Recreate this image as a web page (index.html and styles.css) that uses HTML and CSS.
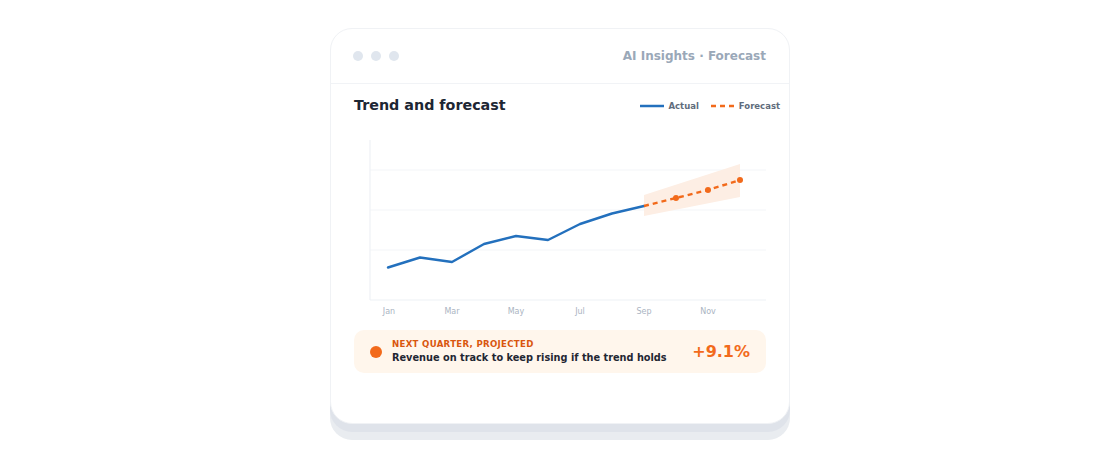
FILE: index.html
```html
<!DOCTYPE html>
<html>
<head>
<meta charset="utf-8">
<link rel="stylesheet" href="styles.css">
</head>
<body>
<div class="stage">
  <div class="card">
    <div class="bar">
      <div class="dots"><span></span><span></span><span></span></div>
      <div class="bar-title">AI Insights · Forecast</div>
    </div>
    <div class="body">
      <div class="head">
        <div class="title">Trend and forecast</div>
        <div class="legend">
          <span class="key"><svg width="24" height="4" viewBox="0 0 24 4"><line x1="0" y1="2" x2="24" y2="2" stroke="#2370bd" stroke-width="2.5"/></svg>Actual</span>
          <span class="key"><svg width="24" height="4" viewBox="0 0 24 4"><line x1="0" y1="2" x2="24" y2="2" stroke="#f26a1b" stroke-width="2.5" stroke-dasharray="5 4"/></svg>Forecast</span>
        </div>
      </div>
      <svg class="chart" width="412" height="184" viewBox="354 134 412 184">
        <line x1="370" y1="170" x2="766" y2="170" stroke="#f3f5f8" stroke-width="1"/>
        <line x1="370" y1="210" x2="766" y2="210" stroke="#f3f5f8" stroke-width="1"/>
        <line x1="370" y1="250" x2="766" y2="250" stroke="#f3f5f8" stroke-width="1"/>
        <line x1="370" y1="140" x2="370" y2="300" stroke="#eef1f5" stroke-width="1.2"/>
        <line x1="370" y1="300" x2="766" y2="300" stroke="#eef1f5" stroke-width="1.2"/>
        <polygon points="644,195 740,164 740,197 644,216" fill="#fdeee4"/>
        <polyline points="388,267.5 420,257.5 452,262 484,244 516,236 548,240 580,224 612,213.5 644,206" fill="none" stroke="#2370bd" stroke-width="2.4" stroke-linejoin="round" stroke-linecap="round"/>
        <polyline points="644,206 676,198 708,190 740,180" fill="none" stroke="#f26a1b" stroke-width="2.4" stroke-dasharray="5 4"/>
        <circle cx="676" cy="198" r="3" fill="#f26a1b"/>
        <circle cx="708" cy="190" r="3" fill="#f26a1b"/>
        <circle cx="740" cy="180" r="3" fill="#f26a1b"/>
        <g class="ticks">
          <text x="389" y="314">Jan</text>
          <text x="452" y="314">Mar</text>
          <text x="516" y="314">May</text>
          <text x="580" y="314">Jul</text>
          <text x="644" y="314">Sep</text>
          <text x="708" y="314">Nov</text>
        </g>
      </svg>
      <div class="callout">
        <span class="dot"></span>
        <div class="callout-text">
          <div class="eyebrow">NEXT QUARTER, PROJECTED</div>
          <div class="msg">Revenue on track to keep rising if the trend holds</div>
        </div>
        <div class="value">+9.1%</div>
      </div>
    </div>
  </div>
</div>
</body>
</html>
```

FILE: styles.css
```css
* { box-sizing: border-box; }
html, body { margin: 0; padding: 0; background: #ffffff; }
body { font-family: "DejaVu Sans", sans-serif; }
.stage {
  width: 1120px;
  height: 470px;
  padding-top: 28px;
  display: flex;
  justify-content: center;
  align-items: flex-start;
}
.card {
  width: 460px;
  height: 396px;
  background: #ffffff;
  border: 1px solid #f0f2f5;
  border-radius: 22px;
  box-shadow: 0 8px 0 #dfe3ea, 0 16px 0 #e9ecf0;
}
.bar {
  height: 55px;
  padding: 0 23px 0 22px;
  border-bottom: 1px solid #f1f3f6;
  display: flex;
  align-items: center;
  justify-content: space-between;
}
.dots { display: flex; gap: 8px; }
.dots span {
  width: 10px;
  height: 10px;
  border-radius: 50%;
  background: #e0e6ee;
}
.bar-title {
  font-size: 12px;
  font-weight: bold;
  color: #9aa8b8;
}
.body { padding: 0 23px; }
.head {
  height: 42px;
  display: flex;
  align-items: center;
  justify-content: space-between;
  margin-right: -14px;
}
.title {
  font-size: 14.3px;
  font-weight: bold;
  color: #1d2633;
}
.legend {
  display: flex;
  gap: 12px;
  font-size: 8.5px;
  font-weight: bold;
  color: #5f6c7c;
  padding-top: 2px;
}
.key { display: flex; align-items: center; gap: 4px; }
.chart { display: block; margin-top: 8px; }
.ticks text {
  font-family: "DejaVu Sans", sans-serif;
  font-size: 8px;
  fill: #aab4c2;
  text-anchor: middle;
}
.callout {
  margin-top: 12px;
  height: 43px;
  border-radius: 10px;
  background: #fff6ec;
  display: flex;
  align-items: center;
  padding: 0 16px 0 16px;
}
.dot {
  width: 12px;
  height: 12px;
  border-radius: 50%;
  background: #f26a1b;
  flex: none;
}
.callout-text { margin-left: 10px; flex: 1; }
.eyebrow {
  font-size: 8.6px;
  font-weight: bold;
  color: #d9560f;
  letter-spacing: 0.3px;
  line-height: 12px;
}
.msg {
  font-size: 9.75px;
  font-weight: bold;
  color: #1f2733;
  line-height: 15px;
}
.value {
  font-size: 16px;
  font-weight: bold;
  color: #f26a1b;
}
```
